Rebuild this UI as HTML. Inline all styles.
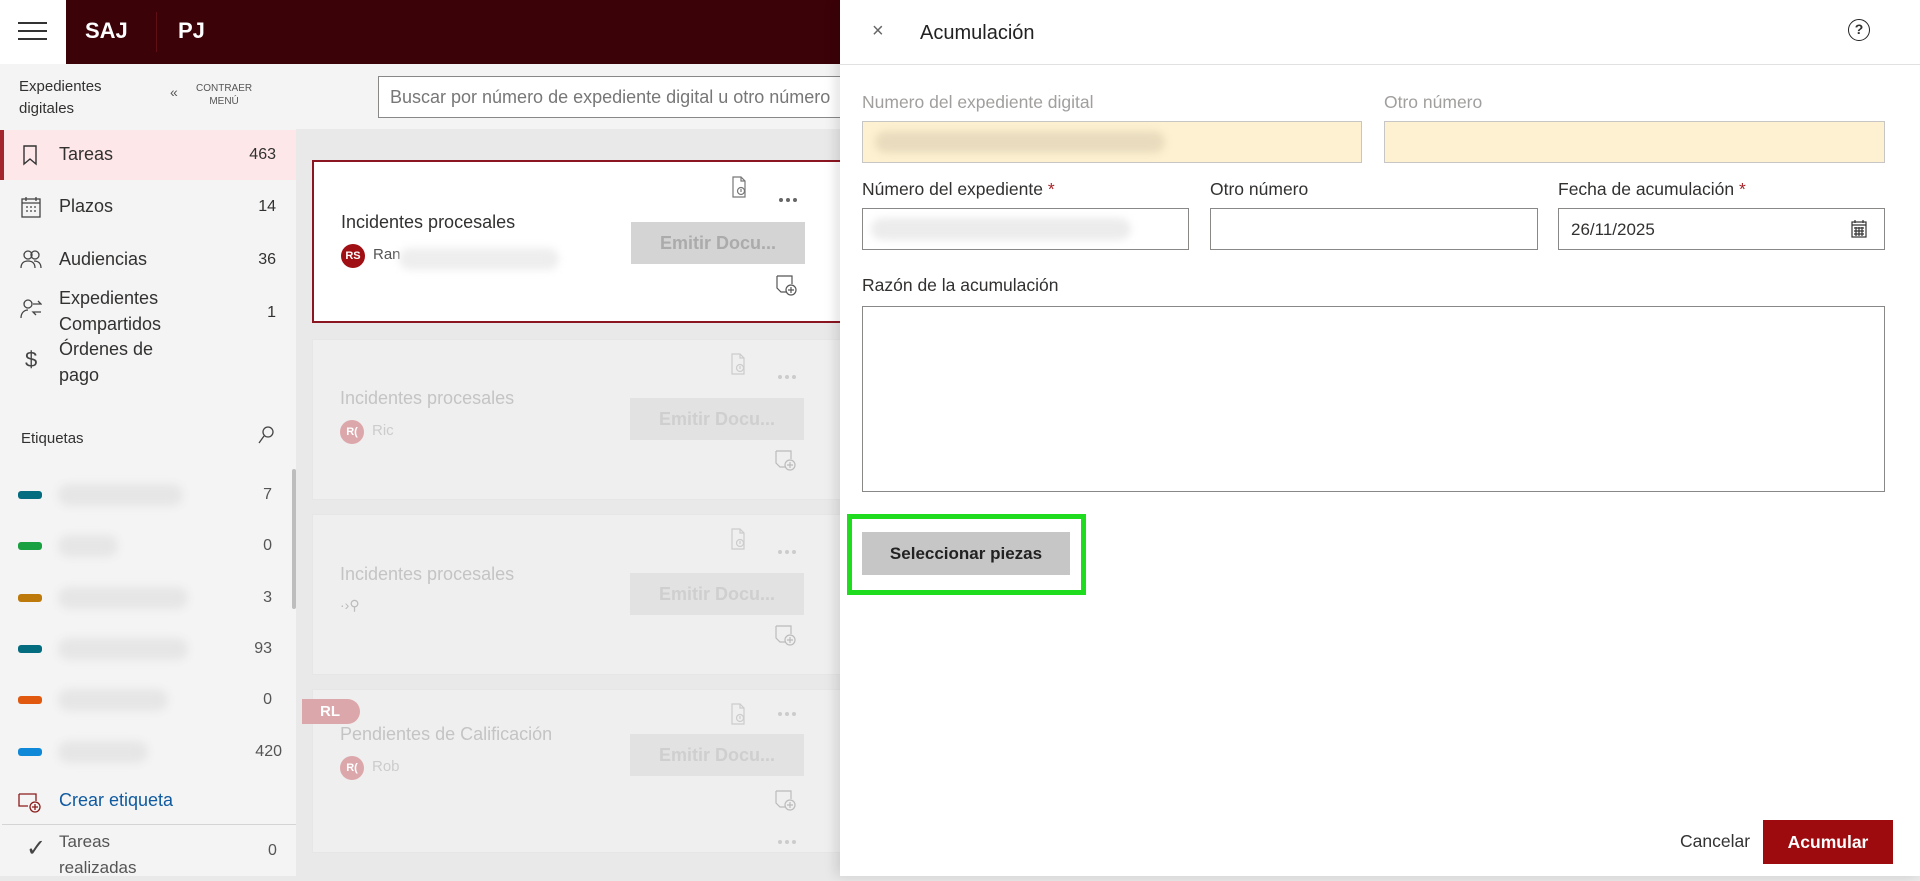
<!DOCTYPE html>
<html><head><meta charset="utf-8"><style>
*{box-sizing:border-box;margin:0;padding:0}
body{width:1920px;height:876px;overflow:hidden;font-family:"Liberation Sans",sans-serif;background:#e9e9e9;position:relative;color:#323130}
.a{position:absolute}
.hdr{left:0;top:0;width:1920px;height:64px;background:#3b0208}
.ham{left:0;top:0;width:66px;height:64px;background:#fff}
.ham i{position:absolute;left:18px;width:29px;height:2px;background:#333}
.side{left:0;top:64px;width:296px;height:812px;background:#f4f4f4}
.nav{position:absolute;left:0;width:296px;font-size:18px;color:#323130}
.nav .t{position:absolute;left:59px}
.nav .n{position:absolute;right:20px;font-size:16px}
.tag{position:absolute;left:18px;width:24px;height:8px;border-radius:3px}
.blur{position:absolute;height:22px;border-radius:11px;background:#e6e6e6;filter:blur(4px)}
.cnt{position:absolute;right:24px;font-size:16px;color:#555}
.card{position:absolute;left:312px;width:540px;background:#efefef;border:1px solid #e6e6e6}
.card h3{position:absolute;left:27px;font-weight:normal;font-size:18px;color:#c4c4c4}
.btn{position:absolute;left:317px;width:174px;height:42px;background:#e2e2e2;color:#cfcfcf;font-weight:bold;font-size:18px;text-align:center;line-height:42px}
.av{position:absolute;left:27px;width:24px;height:24px;border-radius:12px;background:#dca7ab;color:#fff;font-size:11px;font-weight:bold;text-align:center;line-height:24px}
.dots{position:absolute;left:464px;width:22px;height:4px}
.dots i{position:absolute;top:0;width:4px;height:4px;border-radius:2px;background:#ccc}
.dots i:nth-child(1){left:1px}.dots i:nth-child(2){left:8px}.dots i:nth-child(3){left:15px}
.ic{position:absolute}
.panel{left:840px;top:0;width:1080px;height:876px;background:#fff;box-shadow:-4px 0 12px rgba(0,0,0,.12)}
.lbl{position:absolute;font-size:17.5px;color:#323130}
.inp{position:absolute;border:1px solid #8a8886;background:#fff;height:42px}
.req{color:#a4262c}
</style></head><body>
<svg width="0" height="0" style="position:absolute"><defs>
<symbol id="doc" viewBox="0 0 16 22"><path d="M2 1h8l4 4v16H2z M10 1v4h4" fill="none" stroke="currentColor" stroke-width="1.2"/><circle cx="10" cy="15" r="3.5" fill="none" stroke="currentColor" stroke-width="1.2"/><path d="M10 13v3" stroke="currentColor" stroke-width="1.2"/></symbol>
<symbol id="note" viewBox="0 0 22 22"><path d="M1 1h15v8M1 1v12l4 4h6" fill="none" stroke="currentColor" stroke-width="1.2"/><circle cx="15" cy="15" r="5" fill="none" stroke="currentColor" stroke-width="1.2"/><path d="M15 12v6M12 15h6" stroke="currentColor" stroke-width="1.2"/></symbol>
</defs></svg>
<div class="a hdr"></div>
<div class="a ham"><i style="top:22px"></i><i style="top:30px"></i><i style="top:38px"></i></div>
<div class="a" style="left:85px;top:18px;color:#fff;font-weight:bold;font-size:22px">SAJ</div>
<div class="a" style="left:156px;top:12px;width:1px;height:40px;background:#5e1016"></div>
<div class="a" style="left:178px;top:18px;color:#fff;font-weight:bold;font-size:22px">PJ</div>

<div class="a side">
 <div class="a" style="left:19px;top:12px;font-size:15px;line-height:22px">Expedientes<br>digitales</div>
 <div class="a" style="left:170px;top:20px;font-size:14px;color:#555">«</div>
 <div class="a" style="left:196px;top:18px;font-size:10px;color:#555;text-align:center;line-height:13px">CONTRAER<br>MENÚ</div>
 <div class="nav" style="top:66px;height:50px;background:#fde7e9;border-left:4px solid #a4262c">
  <svg class="a" style="left:17px;top:14px" width="18" height="22" viewBox="0 0 18 22" fill="none" stroke="#333" stroke-width="1.4"><path d="M3 2h12v18l-6-5-6 5z"/></svg>
  <span class="t" style="top:14px;left:55px">Tareas</span><span class="n" style="top:16px">463</span></div>
 <div class="nav" style="top:128px;height:30px">
  <svg class="a" style="left:21px;top:4px" width="20" height="22" viewBox="0 0 20 22" fill="none" stroke="#444" stroke-width="1.3"><rect x="1" y="3" width="18" height="18"/><path d="M1 7h18M5 1v4M15 1v4M5 11h2M9 11h2M13 11h2M5 15h2M9 15h2M13 15h2"/></svg>
  <span class="t" style="top:4px">Plazos</span><span class="n" style="top:6px">14</span></div>
 <div class="nav" style="top:181px;height:30px">
  <svg class="a" style="left:20px;top:4px" width="22" height="20" viewBox="0 0 22 20" fill="none" stroke="#444" stroke-width="1.3"><circle cx="8" cy="6" r="4"/><circle cx="15" cy="6" r="4"/><path d="M1 19c0-5 3-7 7-7s7 2 7 7M14 12c4 0 7 2 7 7"/></svg>
  <span class="t" style="top:4px">Audiencias</span><span class="n" style="top:6px">36</span></div>
 <div class="nav" style="top:219px;height:52px;line-height:26px">
  <svg class="a" style="left:20px;top:15px" width="22" height="22" viewBox="0 0 22 22" fill="none" stroke="#444" stroke-width="1.3"><circle cx="8" cy="6" r="4"/><path d="M1 20c0-5 3-8 7-8M13 6h8l-3-3M21 14h-8l3 3"/></svg>
  <span class="t" style="top:2px">Expedientes<br>Compartidos</span><span class="n" style="top:17px">1</span></div>
 <div class="nav" style="top:270px;height:52px;line-height:26px">
  <span class="a" style="left:25px;top:13px;font-size:22px;color:#444">$</span>
  <span class="t" style="top:2px">Órdenes de<br>pago</span></div>
 <div class="a" style="left:21px;top:366px;font-size:15px">Etiquetas</div>
 <svg class="a" style="left:258px;top:362px" width="16" height="18" viewBox="0 0 16 18" fill="none" stroke="#444" stroke-width="1.3"><circle cx="10" cy="6" r="5"/><path d="M6 10l-5 7"/></svg>
 <div class="a" style="left:292px;top:405px;width:4px;height:140px;background:#bdbdbd;border-radius:2px"></div>
 <div class="tag" style="top:427px;background:#036c7f"></div><div class="blur" style="left:58px;top:420px;width:125px"></div><div class="cnt" style="top:422px;right:24px">7</div>
 <div class="tag" style="top:478px;background:#19a040"></div><div class="blur" style="left:58px;top:471px;width:60px"></div><div class="cnt" style="top:473px">0</div>
 <div class="tag" style="top:530px;background:#bd7a0b"></div><div class="blur" style="left:58px;top:523px;width:130px"></div><div class="cnt" style="top:525px">3</div>
 <div class="tag" style="top:581px;background:#036c7f"></div><div class="blur" style="left:58px;top:574px;width:130px"></div><div class="cnt" style="top:576px">93</div>
 <div class="tag" style="top:632px;background:#e0590f"></div><div class="blur" style="left:58px;top:625px;width:110px"></div><div class="cnt" style="top:627px">0</div>
 <div class="tag" style="top:684px;background:#1088d8"></div><div class="blur" style="left:58px;top:677px;width:90px"></div><div class="cnt" style="top:679px;right:14px">420</div>
 <svg class="a" style="left:18px;top:727px" width="24" height="22" viewBox="0 0 24 22" fill="none" stroke="#8b1a1a" stroke-width="1.3"><path d="M1 3h17v7M1 3v12h9"/><circle cx="17" cy="16" r="5"/><path d="M17 13v6M14 16h6"/></svg>
 <div class="a" style="left:59px;top:726px;font-size:18px;color:#0f5aa0">Crear etiqueta</div>
 <div class="a" style="left:2px;top:760px;width:294px;height:1px;background:#d4d4d4"></div>
 <div class="a" style="left:26px;top:770px;font-size:24px;color:#444">✓</div>
 <div class="a" style="left:59px;top:765px;font-size:17px;line-height:26px;color:#555">Tareas<br>realizadas</div>
 <div class="a" style="left:268px;top:778px;font-size:16px;color:#555">0</div>
</div>

<div class="a" style="left:296px;top:64px;width:544px;height:65px;background:#f4f4f4"></div>
<div class="a" style="left:378px;top:76px;width:470px;height:42px;background:#fff;border:1px solid #8a8886;font-size:18px;color:#777;padding:10px 11px;white-space:nowrap;overflow:hidden">Buscar por número de expediente digital u otro número</div>

<div class="card" style="top:160px;height:163px;background:#fff;border:2px solid #8b1520">
 <h3 style="top:50px;color:#323130">Incidentes procesales</h3>
 <div class="av" style="top:82px;background:#a00f14">RS</div>
 <span class="a" style="left:59px;top:84px;font-size:15px;color:#555">Ran</span>
 <div class="blur" style="left:85px;top:86px;width:160px;background:#eee"></div>
 <div class="btn" style="top:60px;color:#ababab;background:#d4d4d4">Emitir Docu...</div>
 <svg class="ic" style="left:417px;top:14px;color:#777" width="16" height="22"><use href="#doc"/></svg>
 <div class="dots" style="top:36px"><i style="background:#666"></i><i style="background:#666"></i><i style="background:#666"></i></div>
 <svg class="ic" style="left:462px;top:113px;color:#555" width="22" height="22"><use href="#note"/></svg>
</div>
<div class="card" style="top:339px;height:161px">
 <h3 style="top:48px">Incidentes procesales</h3>
 <div class="av" style="top:80px">R(</div><span class="a" style="left:59px;top:82px;font-size:15px;color:#ccc">Ric</span>
 <div class="btn" style="top:58px">Emitir Docu...</div>
 <svg class="ic" style="left:417px;top:13px;color:#ccc" width="16" height="22"><use href="#doc"/></svg>
 <div class="dots" style="top:35px"><i></i><i></i><i></i></div>
 <svg class="ic" style="left:462px;top:110px;color:#bbb" width="22" height="22"><use href="#note"/></svg>
</div>
<div class="card" style="top:514px;height:161px">
 <h3 style="top:49px">Incidentes procesales</h3>
 <span class="a" style="left:27px;top:82px;font-size:14px;color:#bbb">·›⚲</span>
 <div class="btn" style="top:58px">Emitir Docu...</div>
 <svg class="ic" style="left:417px;top:13px;color:#ccc" width="16" height="22"><use href="#doc"/></svg>
 <div class="dots" style="top:35px"><i></i><i></i><i></i></div>
 <svg class="ic" style="left:462px;top:110px;color:#bbb" width="22" height="22"><use href="#note"/></svg>
</div>
<div class="card" style="top:689px;height:164px">
 <h3 style="top:34px">Pendientes de Calificación</h3>
 <div class="av" style="top:66px">R(</div><span class="a" style="left:59px;top:68px;font-size:15px;color:#ccc">Rob</span>
 <div class="btn" style="top:44px">Emitir Docu...</div>
 <svg class="ic" style="left:417px;top:13px;color:#ccc" width="16" height="22"><use href="#doc"/></svg>
 <div class="dots" style="top:22px"><i></i><i></i><i></i></div>
 <svg class="ic" style="left:462px;top:100px;color:#bbb" width="22" height="22"><use href="#note"/></svg>
 <div class="dots" style="top:150px"><i></i><i></i><i></i></div>
</div>
<div class="a" style="left:302px;top:699px;width:58px;height:25px;background:#dca7ab;border-radius:0 13px 13px 0;color:#fff;font-weight:bold;font-size:15px;line-height:25px;padding-left:18px">RL</div>

<div class="a panel">
 <div class="a" style="left:32px;top:20px;font-size:20px;color:#666">×</div>
 <div class="a" style="left:80px;top:22px;font-size:20px;color:#222">Acumulación</div>
 <div class="a" style="left:1008px;top:19px;width:22px;height:22px;border:1.5px solid #222;border-radius:50%;font-size:14px;text-align:center;line-height:19px;font-weight:bold">?</div>
 <div class="a" style="left:0;top:64px;width:1080px;height:1px;background:#e1e1e1"></div>

 <div class="lbl" style="left:22px;top:92px;color:#a19f9d">Numero del expediente digital</div>
 <div class="lbl" style="left:544px;top:92px;color:#a19f9d">Otro número</div>
 <div class="inp" style="left:22px;top:121px;width:500px;background:#fdf1d1;border-color:#c8c6c4"><div class="blur" style="left:12px;top:9px;width:290px;background:#e9dcbe"></div></div>
 <div class="inp" style="left:544px;top:121px;width:501px;background:#fdf1d1;border-color:#c8c6c4"></div>

 <div class="lbl" style="left:22px;top:179px">Número del expediente <span class="req">*</span></div>
 <div class="lbl" style="left:370px;top:179px">Otro número</div>
 <div class="lbl" style="left:718px;top:179px">Fecha de acumulación <span class="req">*</span></div>
 <div class="inp" style="left:22px;top:208px;width:327px"><div class="blur" style="left:8px;top:9px;width:260px;background:#ececec"></div></div>
 <div class="inp" style="left:370px;top:208px;width:328px"></div>
 <div class="inp" style="left:718px;top:208px;width:327px;font-size:17px;padding:11px 12px">26/11/2025
  <svg class="a" style="left:292px;top:11px" width="16" height="18" viewBox="0 0 16 18" fill="none" stroke="#333" stroke-width="1.2"><rect x="1" y="2" width="14" height="15"/><path d="M1 5h14M4 0v3M12 0v3M3 8h10M3 11h10M3 14h10M5 7v9M8 7v9M11 7v9"/></svg></div>

 <div class="lbl" style="left:22px;top:275px">Razón de la acumulación</div>
 <div class="inp" style="left:22px;top:306px;width:1023px;height:186px"></div>

 <div class="a" style="left:7px;top:514px;width:239px;height:81px;border:5px solid #1fdc1f"></div>
 <div class="a" style="left:22px;top:532px;width:208px;height:43px;background:#c6c6c6;font-weight:bold;font-size:17px;color:#222;text-align:center;line-height:43px">Seleccionar piezas</div>

 <div class="a" style="left:840px;top:831px;font-size:17.5px;color:#333">Cancelar</div>
 <div class="a" style="left:923px;top:820px;width:130px;height:44px;background:#9d0b0f;color:#fff;font-weight:bold;font-size:17.5px;text-align:center;line-height:44px">Acumular</div>
</div>
</body></html>
